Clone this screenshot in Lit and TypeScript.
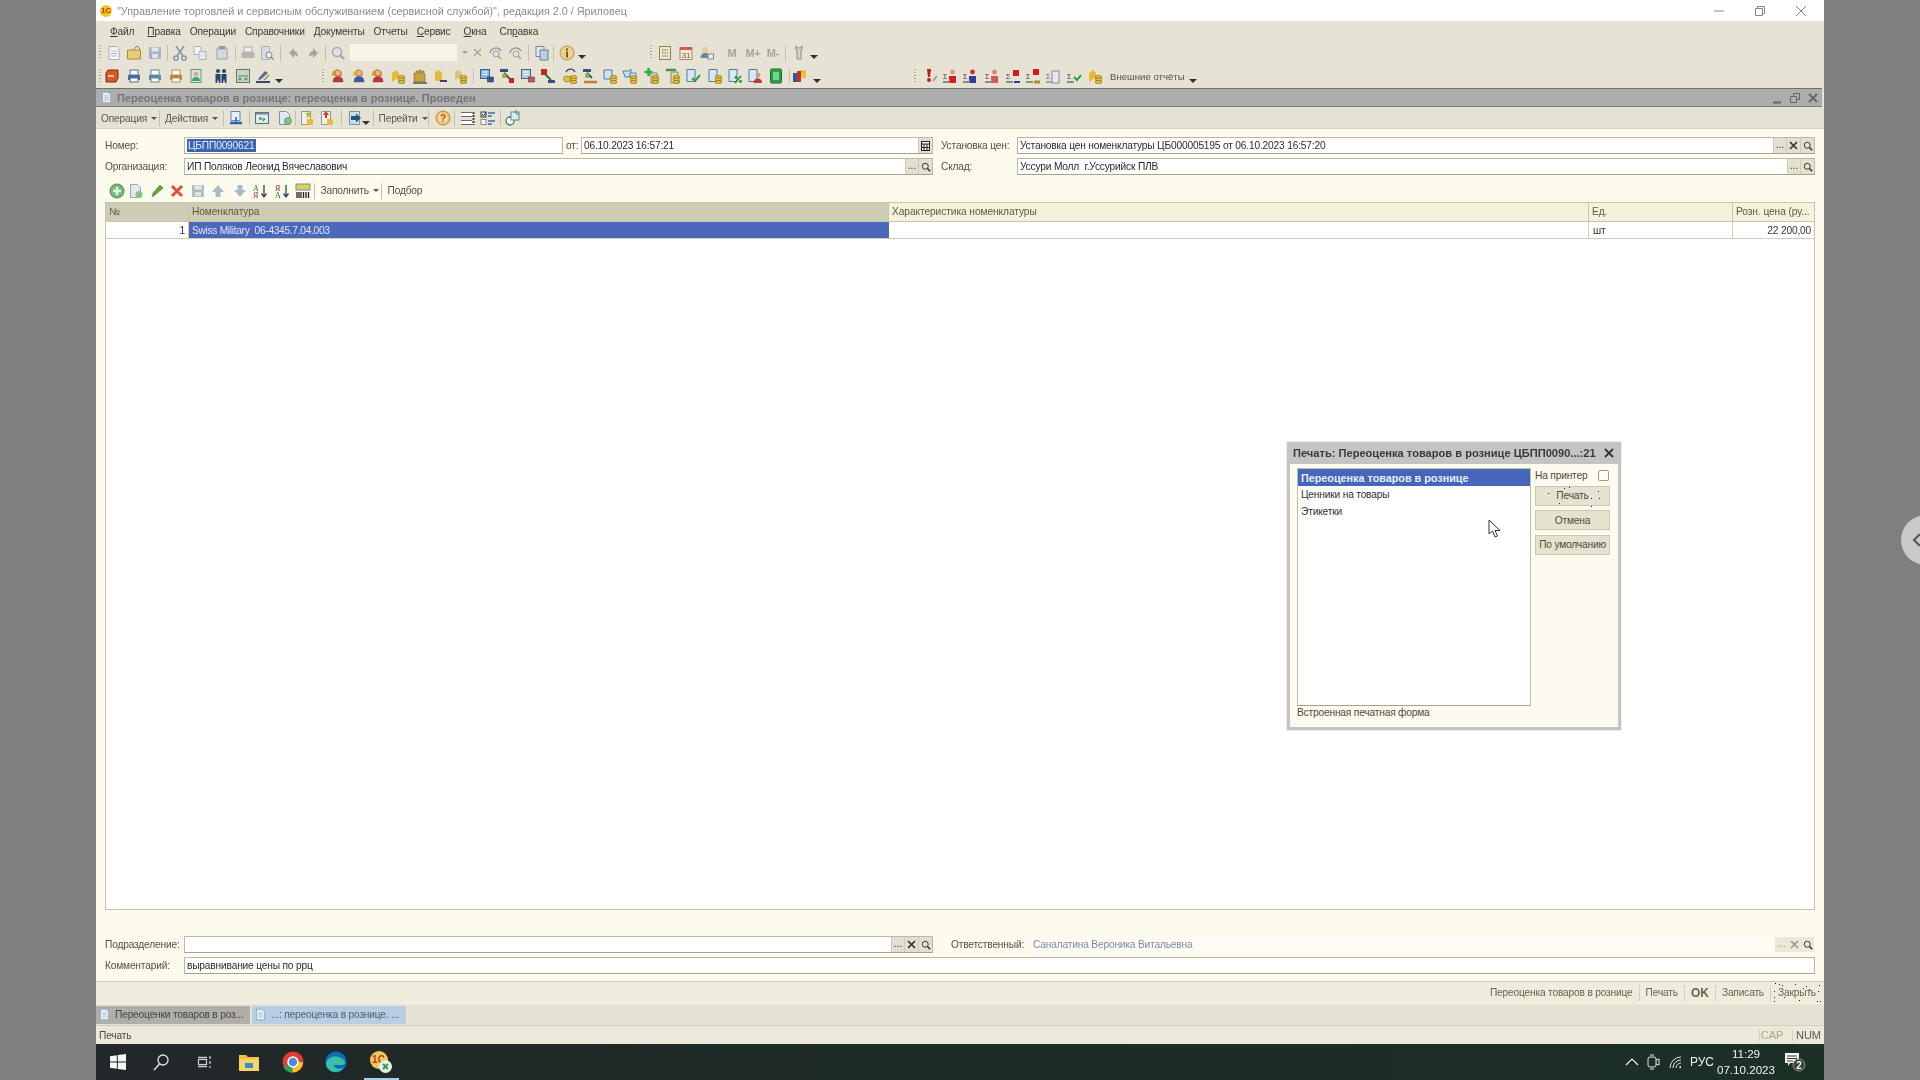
import { LitElement, html, css, svg } from 'lit';
import { customElement } from 'lit/decorators.js';

// small toolbar pictures, all on a 16x16 grid
const coins = svg`<ellipse cx="11.5" cy="9" rx="3.4" ry="1.5" fill="#e8c23c" stroke="#8a6d10" stroke-width=".7"/><ellipse cx="11.5" cy="11.5" rx="3.4" ry="1.5" fill="#e8c23c" stroke="#8a6d10" stroke-width=".7"/><ellipse cx="11.5" cy="14" rx="3.4" ry="1.5" fill="#e8c23c" stroke="#8a6d10" stroke-width=".7"/>`;
const sheet = (fill = '#fff', line = '#7d8ea5') => svg`<path d="M3 1.5h7l3 3v10H3z" fill="${fill}" stroke="${line}"/><path d="M5 6h6M5 8.5h6M5 11h6" stroke="#a9b6c6"/>`;
const person = (shirt: string) => svg`<circle cx="8" cy="5" r="3" fill="#f0b48c" stroke="#8a5a3a" stroke-width=".6"/><path d="M3 14c0-4 2-5.500 5-5.500s5 1.500 5 5.500z" fill="${shirt}" stroke="#555" stroke-width=".5"/>`;
const disk = (c: string) => svg`<rect x="2" y="2" width="12" height="12" rx="1" fill="${c}"/><rect x="4.500" y="2.500" width="7" height="4" fill="#e8e8e8"/><rect x="5" y="9" width="6" height="4" fill="#dfe3e8"/>`;
const printer = (c: string) => svg`<rect x="4" y="2" width="8" height="5" fill="#fff" stroke="${c}"/><path d="M2 7h12v5H2z" fill="${c}"/><rect x="4" y="10" width="8" height="4" fill="#fff" stroke="${c}"/>`;
const doc2 = (a: string, b: string) => svg`<rect x="1.500" y="1.500" width="9" height="9" fill="${a}" stroke="#45618a"/><path d="M3.500 4h5M3.500 6.500h5" stroke="#fff"/><rect x="8.500" y="9" width="6" height="5" fill="${b}" stroke="#333" stroke-width=".5"/>`;
const sigma = (c = '#334') => svg`<text x="1" y="11" font-size="7" font-family="Liberation Sans" fill="${c}">Σ</text><path d="M1 14h7" stroke="${c}"/>`;

const ICONS: Record<string, unknown> = {
  doc: sheet('#f7f8fb', '#a4b0c2'),
  folder: svg`<path d="M1.500 5h13v9h-13z" fill="#e8cd78" stroke="#a78c38"/><path d="M8 4l3-3 3 3" fill="none" stroke="#777"/>`,
  save: disk('#a7b3c4'),
  cut: svg`<path d="M4 1l7 10M12 1L5 11" stroke="#8796aa" stroke-width="1.600"/><circle cx="4" cy="13" r="2.200" fill="none" stroke="#7d8ea5" stroke-width="1.300"/><circle cx="12" cy="13" r="2.200" fill="none" stroke="#7d8ea5" stroke-width="1.300"/>`,
  copy: svg`<path d="M2 1.500h7v8H2z" fill="#f2f3f5" stroke="#aab4c2"/><path d="M7 6.500h7v8H7z" fill="#e6e8ec" stroke="#aab4c2"/>`,
  paste: svg`<rect x="2" y="2" width="12" height="13" rx="1.500" fill="#b8c0c8"/><rect x="5" y="1" width="6" height="3" fill="#8f99a3"/><rect x="4" y="5" width="8" height="8" fill="#d5d9dd"/>`,
  print: svg`<rect x="4" y="2" width="8" height="5" fill="#eee" stroke="#aaa"/><rect x="1.500" y="7" width="13" height="6" rx="1.500" fill="#b5b5ad"/>`,
  preview: svg`<path d="M2.500 1.500h8v13h-8z" fill="#d8dbe0" stroke="#aab0b8"/><circle cx="10" cy="10" r="3" fill="#eee" stroke="#888"/><path d="M12 12l2.500 2.500" stroke="#888" stroke-width="1.500"/>`,
  undo: svg`<path d="M8 3L3 8l5 5V10c2 0 3 1 4 2 0-4-2-6-4-6z" fill="#a4a49c"/>`,
  redo: svg`<path d="M8 3l5 5-5 5V10c-2 0-3 1-4 2 0-4 2-6 4-6z" fill="#a4a49c"/>`,
  lens: svg`<circle cx="7" cy="7" r="4.500" fill="#dfe2e2" stroke="#a4adad" stroke-width="1.500"/><path d="M10 10l4 4" stroke="#a4a49c" stroke-width="2.200"/>`,
  lensL: svg`<path d="M3 8a6 6 0 0 1 11-2" fill="none" stroke="#9aa19e" stroke-width="1.500"/><circle cx="9" cy="9" r="3" fill="#dfe2e2" stroke="#9aa19e"/><path d="M11 11l3 3" stroke="#9aa19e" stroke-width="1.500"/>`,
  pages: svg`<path d="M2 1.500h8v10H2z" fill="#e4e8ee" stroke="#7c8898"/><path d="M6 5h8v10H6z" fill="#bdd0e2" stroke="#5e7e9e"/>`,
  info: svg`<circle cx="8" cy="8" r="7" fill="#ecd28c" stroke="#b09050"/><rect x="7" y="6.500" width="2" height="6" fill="#8a5a18"/><rect x="7" y="3.500" width="2" height="2" fill="#8a5a18"/>`,
  calc: svg`<rect x="2.500" y="1.500" width="11" height="13" fill="#eee6c8" stroke="#8a8260"/><path d="M5 5h6M5 8h6M5 11h6" stroke="#6a6240" stroke-dasharray="1.500 1"/>`,
  cal: svg`<rect x="2" y="2.500" width="12" height="12" fill="#f4ead8" stroke="#a88868"/><rect x="2" y="2" width="12" height="3" fill="#c8604a"/><text x="8" y="13" font-size="8" font-family="Liberation Sans" text-anchor="middle" fill="#a04030">31</text>`,
  users: svg`<circle cx="6" cy="5" r="3" fill="#e9c9a0"/><path d="M1.500 13c0-3.500 2-5 4.500-5s4 1 4.500 3v2z" fill="#6a88ac"/><rect x="9" y="9" width="5.500" height="5" fill="#eee" stroke="#888"/>`,
  tool: svg`<path d="M5 1v4h1v9h4V5h1V1L9.500 3h-3z" fill="#d4d4ca" stroke="#8c8c82"/>`,
  box: svg`<path d="M2 5l2-3h10v8l-2 4H2z" fill="#d8582c" stroke="#7a2c10"/><path d="M4 8h6" stroke="#f0d080" stroke-width="2"/>`,
  pr1: printer('#4e6e98'), pr2: printer('#5a8aa0'), pr3: printer('#b88a48'),
  badge: svg`<rect x="3" y="1.500" width="10" height="13" fill="#cfe8d8" stroke="#6a9a80"/><circle cx="8" cy="6" r="2.300" fill="#e0a878"/><path d="M4 13c0-3 2-4 4-4s4 1 4 4z" fill="#45a070"/>`,
  men: svg`<circle cx="5" cy="3" r="2" fill="#27456e"/><circle cx="11" cy="3" r="2" fill="#27456e"/><path d="M2.500 6h5v9h-1.500l-1-4-1 4H2.500zM8.500 6h5v9H12l-1-4-1 4H8.500z" fill="#27456e"/>`,
  grid: svg`<rect x="1.500" y="1.500" width="13" height="13" fill="#c6d6c6" stroke="#667a6a"/><path d="M3 8h10" stroke="#667a6a"/><circle cx="5" cy="11" r="1.500" fill="#4aa060"/><circle cx="11" cy="11" r="1.500" fill="#4aa060"/>`,
  sign: svg`<path d="M1 14h14" stroke="#384868" stroke-width="2"/><path d="M3 11l7-8 3 2-8 7z" fill="#566a90"/><path d="M9 12l5-5" stroke="#8a9a50" stroke-width="1.500"/>`,
  cartR: svg`<path d="M2 4l5-3 5 3v4H2z" fill="#e8a020"/>${person('#d03030')}`,
  cartB: svg`<path d="M2 4l5-3 5 3v4H2z" fill="#e8c040"/>${person('#3858a8')}`,
  coinA: svg`<path d="M2 14V5l4-3 3 3v4z" fill="#e8b838"/>${coins}`,
  house: svg`<path d="M2 14V5h2V3h2v2h1V2h2v3h1V3h2v3h1v8z" fill="#c8a040" stroke="#6a5a20" stroke-width=".5"/><path d="M1 15h14" stroke="#556" stroke-width="1.500"/>`,
  coinB: svg`<path d="M3 13V4l4-2 3 3v8z" fill="#e8b838"/><path d="M8 13h7" stroke="#446" stroke-width="2"/>`,
  coinC: svg`<path d="M3 11V4l4-2 3 3v5z" fill="#d8c080"/>${coins}`,
  tr1: doc2('#8ab4dc', '#3058a8'),
  tr2: svg`<rect x="1" y="1" width="8" height="3" fill="#364e80"/><path d="M5 5l6 6" stroke="#287030" stroke-width="2"/><rect x="10" y="10" width="5" height="5" fill="#d02020"/><rect x="3" y="6" width="4" height="4" fill="#9ab04c"/>`,
  tr3: doc2('#b6cde8', '#d05060'),
  tr4: svg`<rect x="1" y="1" width="6" height="6" fill="#d02020"/><path d="M5 6l6 6" stroke="#287030" stroke-width="2"/><rect x="8" y="12" width="7" height="3" fill="#364e80"/>`,
  coinD: svg`<path d="M4 4a5 5 0 0 1 9 0" fill="none" stroke="#445" stroke-width="1.300"/>${coins}<ellipse cx="5" cy="11" rx="3.400" ry="3" fill="#e8c23c" stroke="#8a6d10" stroke-width=".7"/>`,
  tr5: svg`<rect x="1" y="1" width="8" height="3" fill="#364e80"/><path d="M5 5l5 5" stroke="#287030" stroke-width="2"/><rect x="3" y="6" width="4" height="4" fill="#9ab04c"/><path d="M2 14h13" stroke="#b88030" stroke-width="2.500"/>`,
  coinE: svg`<path d="M2 2h8v9H2z" fill="#cfe2f2" stroke="#507ea0"/>${coins}`,
  coinF: svg`<path d="M1 3h6l2-2v8H3z" fill="#bfe0f0" stroke="#507ea0"/><path d="M8 5h6v4H8z" fill="#dff0f8" stroke="#507ea0"/>${coins}`,
  plusC: svg`<path d="M4.500 0v8M.5 4h8" stroke="#28b030" stroke-width="2.500"/><path d="M7 5h6v10H7z" fill="#dcd8b8" stroke="#887"/>${coins}`,
  dashC: svg`<path d="M1 2h10" stroke="#3a9a40" stroke-width="2.500"/><path d="M6 4h7v11H6z" fill="#dcd8b8" stroke="#887"/>${coins}`,
  checkD: svg`<path d="M2 1.500h8v12H2z" fill="#d8e8f4" stroke="#507ea0"/><path d="M7 10l3 3 5-6" fill="none" stroke="#30a040" stroke-width="2"/>`,
  coinG: svg`<path d="M2 1.500h8v12H2z" fill="#d8e8f4" stroke="#507ea0"/>${coins}`,
  pct: svg`<path d="M2 1.500h8v12H2z" fill="#d8e8f4" stroke="#507ea0"/><path d="M8 15l6-7" stroke="#288a38" stroke-width="1.600"/><circle cx="9" cy="9.500" r="1.400" fill="#288a38"/><circle cx="13.500" cy="13.500" r="1.400" fill="#288a38"/>`,
  docP: svg`<path d="M2 1.500h8v12H2z" fill="#d8e8f4" stroke="#507ea0"/><circle cx="11" cy="7" r="2.400" fill="#e09878"/><path d="M6.500 15c0-3 2-4.500 4.500-4.500s4 1.500 4 4.500z" fill="#c03838"/>`,
  green: svg`<rect x="2.500" y="1" width="11" height="14" rx="1.500" fill="#28a048" stroke="#146a2c"/><rect x="5" y="4" width="6" height="8" fill="#78d090"/>`,
  books: svg`<rect x="1" y="5" width="4" height="9" fill="#2858a8"/><rect x="5" y="3" width="4" height="11" fill="#c83020"/><rect x="9" y="2" width="5" height="8" fill="#e8c040"/>`,
  warn: svg`<path d="M5 1h4l-1 8H6z" fill="#c81818"/><circle cx="7" cy="12" r="2" fill="#c81818"/><path d="M11 13l4-5" stroke="#98a0a8" stroke-width="2"/>`,
  sigR: svg`${sigma()}<circle cx="10.500" cy="4" r="2.400" fill="#e09878"/><path d="M7 11V8h7v7H8z" fill="#d02020"/>`,
  sigB: svg`${sigma()}<circle cx="10.500" cy="4" r="2.400" fill="#d03030"/><path d="M7 11V8h7v7H8z" fill="#2a3e9a"/>`,
  sigP: svg`${sigma()}<circle cx="10.500" cy="4" r="2.400" fill="#d88870"/><path d="M7 11V8h7v7H8z" fill="#d85858"/>`,
  sigF: svg`${sigma()}<path d="M9 14h6" stroke="#2a3a9a" stroke-width="2"/><path d="M8 2h6v6H8z" fill="#d81818"/>`,
  sigG: svg`${sigma()}<path d="M9 14h6" stroke="#b88a28" stroke-width="3"/><path d="M8 1h6v6H8z" fill="#d81818"/>`,
  sigD: svg`${sigma('#667')}<path d="M7 3h7v12H7z" fill="#e8e8e8" stroke="#889"/>`,
  sigC: svg`${sigma()}<path d="M8 9l3 3 4-5" fill="none" stroke="#28a038" stroke-width="2"/>`,
  expImp: svg`<path d="M3 1.500h9v9H3z" fill="#e8eef4" stroke="#6a88ac"/><path d="M2 13h12" stroke="#2a60b0" stroke-width="2.500"/><path d="M8 7v5" stroke="#2a60b0" stroke-width="1.500"/>`,
  refr: svg`<rect x="1.500" y="2.500" width="13" height="11" fill="#dceaf0" stroke="#556f80"/><rect x="1.500" y="2.500" width="13" height="2" fill="#708898"/><path d="M5 9h6M5 9l2-2M11 9l-2 2" stroke="#1e8038"/>`,
  newD: svg`<path d="M2.500 1.500h7l3 3v10h-10z" fill="#e0e8f0" stroke="#7a92aa"/><circle cx="11" cy="11" r="3.500" fill="#8ac088" stroke="#487a48" stroke-width=".6"/>`,
  docY: svg`<path d="M2.500 1.500h9v13h-9z" fill="#f0f0ea" stroke="#8a96a4"/><path d="M9 0l1.500 3H13l-2 2 1 3-2.500-1.500L7 8l1-3-2-2h2.500z" fill="#a8c038"/><rect x="8" y="9" width="6" height="6" fill="#e8b838"/>`,
  docR: svg`<path d="M2.500 1.500h9v13h-9z" fill="#f0f0ea" stroke="#8a96a4"/><path d="M7 1l3 4H8v3H6V5H4z" fill="#c84020"/><rect x="8" y="9" width="6" height="6" fill="#e8b838"/>`,
  goDoc: svg`<path d="M2.500 1.500h10v13h-10z" fill="#c8dcee" stroke="#7a92aa"/><path d="M4 6h5V3.500L14 8l-5 4.500V10H4z" fill="#27527e"/>`,
  help: svg`<circle cx="8" cy="8" r="7" fill="#f0c070" stroke="#bc8a38"/><circle cx="8" cy="8" r="5" fill="#f4d8a0"/><text x="8" y="11.500" font-size="10" font-weight="700" font-family="Liberation Sans" text-anchor="middle" fill="#c04a20">?</text>`,
  rows: svg`<path d="M1 2.500h11M1 6.500h11M1 10.500h11M1 14.500h11" stroke="#667"/><rect x="1" y="3" width="11" height="3" fill="#fff"/><rect x="1" y="11" width="11" height="3" fill="#fff"/><path d="M13.500 2v13" stroke="#444" stroke-width="2" stroke-dasharray="2 1"/>`,
  checks: svg`<rect x="1" y="2" width="5" height="5" fill="#fff" stroke="#333"/><path d="M2 4l1.500 2L6 2" stroke="#222" fill="none"/><rect x="1" y="9.500" width="5" height="5" fill="#fff" stroke="#888"/><path d="M8 3h7M8 6h4M8 11h7M8 14h4" stroke="#3a6ab4" stroke-width="1.500"/>`,
  clock: svg`<circle cx="5" cy="11" r="4" fill="#fff" stroke="#3a8a50" stroke-width="1.300"/><rect x="6" y="2" width="8" height="8" fill="#dfeaf2" stroke="#5e7e9e"/><path d="M11 0v4h3" stroke="#32a050" fill="none"/>`,
  add: svg`<circle cx="8" cy="8" r="7" fill="#78b878" stroke="#468a46"/><path d="M8 4v8M4 8h8" stroke="#e8f4e8" stroke-width="2.500"/>`,
  addD: svg`<path d="M2.500 1.500h7l3 3v10h-10z" fill="#e4e8ec" stroke="#9aa8b8"/><circle cx="11" cy="11.500" r="3.500" fill="#8ac088"/>`,
  pen: svg`<path d="M3 14l1-4 7-8 3 3-8 7z" fill="#58a838" stroke="#3a7a20" stroke-width=".5"/>`,
  del: svg`<path d="M3 3l10 10M13 3L3 13" stroke="#e05038" stroke-width="3"/>`,
  saveG: disk('#b4bcc4'),
  up: svg`<path d="M8 2l6 7h-3.500v5h-5V9H2z" fill="#a8bcc8"/>`,
  down: svg`<path d="M8 14l6-7h-3.500V2h-5v5H2z" fill="#a8bcc8"/>`,
  sortA: svg`<text x="1" y="7.500" font-size="8" font-family="Liberation Serif" fill="#2a5a2a">А</text><text x="1" y="15" font-size="8" font-family="Liberation Serif" fill="#a02a2a">Я</text><path d="M12 2v11M9.500 10.500L12 14l2.500-3.500" fill="none" stroke="#345" stroke-width="1.300"/>`,
  sortZ: svg`<text x="1" y="7.500" font-size="8" font-family="Liberation Serif" fill="#a02a2a">Я</text><text x="1" y="15" font-size="8" font-family="Liberation Serif" fill="#2a5a2a">А</text><path d="M12 2v11M9.500 10.500L12 14l2.500-3.500" fill="none" stroke="#345" stroke-width="1.300"/>`,
  barcode: svg`<rect x="1" y="1" width="14" height="6" fill="#d8d060" stroke="#889"/><path d="M2 9v6M4 9v6M6 9v6M8.500 9v6M11 9v6M13.500 9v6" stroke="#222" stroke-width="1.300"/>`,
  sheet: sheet('#e8f0f8', '#8aa4c0'),
};

const ico = (k: string, s = 16) => html`<svg class="ic" width="${s}" height="${s}" viewBox="0 0 16 16">${ICONS[k]}</svg>`;
const lensBtn = svg`<circle cx="7" cy="7" r="4" fill="none" stroke="#333" stroke-width="1.300"/><path d="M10 10l3.500 3.500" stroke="#333" stroke-width="2"/>`;

type Tool = [number, string];
// [centre x on the page, what sits there]; '|' separator, 'v' drop arrow, ':' grip, 'text' goes by itself
const ROW1: Tool[] = [[100,':'],[114,'doc'],[134,'folder'],[155,'save'],[167,'|'],[180,'cut'],[200,'copy'],[222,'paste'],[235,'|'],[248,'print'],[267,'preview'],[280,'|'],[294,'undo'],[313,'redo'],[325,'|'],[338,'lens'],[477,'x'],[495,'lensL'],[515,'lensL'],[528,'|'],[542,'pages'],[553,'|'],[567,'info'],[582,'v'],[651,':'],[665,'calc'],[686,'cal'],[707,'users'],[732,'M'],[753,'M+'],[773,'M-'],[785,'|'],[799,'tool'],[814,'v']];
const ROW2: Tool[] = [[100,':'],[112,'box'],[134,'pr1'],[155,'pr2'],[176,'pr3'],[196,'badge'],[221,'men'],[243,'grid'],[263,'sign'],[279,'v'],[323,':'],[338,'cartR'],[359,'cartB'],[378,'cartR'],[398,'coinA'],[420,'house'],[440,'coinB'],[460,'coinC'],[473,'|'],[487,'tr1'],[507,'tr2'],[528,'tr3'],[548,'tr4'],[570,'coinD'],[590,'tr5'],[610,'coinE'],[630,'coinF'],[652,'plusC'],[673,'dashC'],[693,'checkD'],[715,'coinG'],[735,'pct'],[755,'docP'],[776,'green'],[789,'|'],[800,'books'],[817,'v'],[915,':'],[930,'warn'],[950,'sigR'],[970,'sigB'],[992,'sigP'],[1013,'sigF'],[1033,'sigG'],[1053,'sigD'],[1074,'sigC'],[1095,'coinA'],[1147,'Внешние отчёты'],[1193,'v']];

// stray video-capture specks on the focused buttons, [x, y] inside the button
const SPECKS_PRINT = [[12,6],[28,1],[33,0],[55,11],[62,4],[63,11],[23,16],[55,19]];
const SPECKS_CLOSE = [[2,0],[6,1],[9,2],[22,1],[30,5],[33,3],[36,6],[1,8],[1,14],[1,18],[11,14],[26,17],[45,8],[44,18],[47,18],[46,2]];
const specks = (pts: number[][]) => `box-shadow:${pts.map(([x, y]) => `${x}px ${y}px 0 #222`).join(',')}`;

@customElement('app-root')
export class AppRoot extends LitElement {
  static styles = css`
    :host {
      display: block;
      width: 1920px;
      height: 1080px;
      position: relative;
      overflow: hidden;
      background: #808080;
      font-family: "Liberation Sans", Arial, sans-serif;
      font-size: 10.2px;
      letter-spacing: -.18px;
      color: #4c4a3c;
    }
    .ic { display: block; flex: none; }
    .win {
      position: absolute;
      left: 96px;
      top: 0;
      width: 1728px;
      height: 1080px;
      display: flex;
      flex-direction: column;
      background: #e6e2d4;
      filter: blur(.3px);
    }
    .titlebar {
      height: 21px;
      background: #fff;
      display: flex;
      align-items: center;
      padding-left: 4px;
      color: #8b8b8b;
      font-size: 10.8px;
      letter-spacing: 0;
      flex: none;
    }
    .titlebar .name { margin-left: 5px; }
    .winbtns { margin-left: auto; display: flex; gap: 29px; padding-right: 17px; }
    .logo {
      width: 12px; height: 12px; border-radius: 50%;
      background: #f0c81c; color: #c8301c;
      font: 700 8px "Liberation Sans", sans-serif;
      display: flex; align-items: center; justify-content: center;
    }
    .menu {
      height: 20px;
      display: flex;
      align-items: center;
      padding-left: 14px;
      gap: 9px;
      flex: none;
      color: #3c3c34;
    }
    .menu u { text-decoration-thickness: 1px; }
    .menu .wide { margin-left: 4px; }
    .tools { height: 23px; display: flex; align-items: center; flex: none; position: relative; }
    .tools.tall { height: 24px; }
    .slot { width: 16px; height: 16px; flex: none; display: flex; align-items: center; justify-content: center; }
    .sep { width: 1px; height: 16px; background: #c4c0b0; flex: none; }
    .grip { width: 2px; height: 15px; flex: none; background: repeating-linear-gradient(#b0ac98 0 1px, transparent 1px 3px); }
    .drop { width: 0; height: 0; flex: none; border: 4px solid transparent; border-top-color: #333; border-bottom: 0; margin-top: 9px; }
    .mini { display: inline-block; width: 0; height: 0; flex: none; border: 3px solid transparent; border-top-color: #555; border-bottom: 0; margin-left: 4px; }
    .mem { color: #a6a498; font-weight: 700; font-size: 11px; white-space: nowrap; }
    .tooltext { white-space: nowrap; font-size: 9.6px; letter-spacing: 0; color: #55534a; flex: none; }
    .quick {
      position: absolute; left: 254px; top: 3px; width: 107px; height: 17px; background: #f7f4e8;
    }
    .quick-arrow { position: absolute; left: 366px; top: 10px; border: 3.5px solid transparent; border-top-color: #a4a49c; border-bottom: 0; }

    .doctitle {
      height: 19px;
      margin-right: 2px;
      flex: none;
      background: #adadad;
      border-top: 1px solid #6f6f6f;
      border-bottom: 1px solid #7c7c7c;
      box-sizing: border-box;
      display: flex;
      align-items: center;
      padding-left: 4px;
      gap: 4px;
      color: #757575;
      font-size: 11px;
      font-weight: 700;
      letter-spacing: 0;
    }
    .docbtns { margin-left: auto; display: flex; gap: 6px; align-items: center; padding-right: 3px; }
    .doctools { height: 22px; padding-top: 1px; flex: none; display: flex; align-items: center; border-bottom: 1px solid #d8d4c2; box-sizing: border-box; color: #5c5a4a; }
    .doctools .t { display: flex; align-items: center; white-space: nowrap; flex: none; }

    .form {
      height: 853px;
      flex: none;
      box-sizing: border-box;
      background: #fdfaee;
      padding: 8px 9px 7px 9px;
      display: flex;
      flex-direction: column;
      border-bottom: 1px solid #cfcbb8;
    }
    .line { display: flex; align-items: stretch; height: 17px; flex: none; }
    .line + .line { margin-top: 4px; }
    .lbl { display: flex; align-items: center; color: #55533f; white-space: nowrap; flex: none; box-sizing: border-box; }
    .field {
      display: flex; align-items: stretch; flex: none;
      background: #fff;
      box-sizing: border-box;
      border: 1px solid #bdb9a4;
      border-bottom-color: #a8a48c;
      color: #2c2c2c;
    }
    .field .val { flex: 1; display: flex; align-items: center; padding-left: 2px; white-space: nowrap; overflow: hidden; }
    .selected { background: #3e63b4; color: #e6ecfa; padding: 0 1px; line-height: 13px; }
    .b { width: 13px; background: #e4e0cf; border-left: 1px solid #cfcbb8; display: flex; align-items: center; justify-content: center; flex: none; color: #333; font-size: 10px; font-weight: 700; }
    .b.dots { font-weight: 400; letter-spacing: 0; align-items: flex-end; padding-bottom: 3px; box-sizing: border-box; }

    .tabletools { height: 23px; margin-top: 4px; display: flex; align-items: center; flex: none; color: #55533f; }
    .tabletools .t { display: flex; align-items: center; white-space: nowrap; flex: none; }
    .grid {
      flex: 1;
      border: 1px solid #c7c3ac;
      background: #fff;
      display: flex;
      flex-direction: column;
    }
    .gh, .gr { display: grid; grid-template-columns: 83px 700px 700px 144px 1fr; flex: none; }
    .gh { height: 19px; background: #f5f2dc; border-bottom: 1px solid #c9c5ae; color: #5c5a44; box-sizing: border-box; letter-spacing: -.08px; }
    .gh > div { display: flex; align-items: center; padding: 0 0 1px 3px; white-space: nowrap; border-right: 1px solid #c9c5ae; overflow: hidden; }
    .gh > div:last-child { border-right: 0; }
    .gh > .act { background: #cfccb6; }
    .gr { height: 17px; border-bottom: 1px solid #d0ccb8; color: #333; box-sizing: border-box; }
    .gr > div { display: flex; align-items: center; padding: 0 3px 0 4px; border-right: 1px solid #d0ccb8; white-space: nowrap; }
    .gr > div:last-child { border-right: 0; }
    .gr > .r { justify-content: flex-end; }
    .gr > .on { background: #4b68bd; color: #dde6f8; border-right: 0; letter-spacing: -.3px; padding-left: 3px; }

    .lower { margin-top: 26px; display: flex; flex-direction: column; flex: none; }
    .flat { border-color: transparent; background: #fdfbf2; color: #7d8ca8; }
    .flat .b { background: #ebe8da; color: #9a9a90; border-left: 0; }
    .resp { padding-left: 18px; }

    .cmd {
      height: 22px; flex: none; display: flex; align-items: center; justify-content: flex-end;
      background: #f0ecdd; padding-right: 6px; color: #6a6446;
      border-bottom: 1px solid #f4f1e4;
      box-sizing: border-box;
    }
    .cmd > span { padding: 0 6px; border-right: 1px solid #d5d1be; line-height: 16px; }
    .cmd > span:last-child { border-right: 0; }
    .cmd .ok { font-weight: 700; font-size: 12px; letter-spacing: 0; }
    .cmd .close { padding: 2px 2px 2px 5px; margin-left: 2px; position: relative; }
    .speck { position: absolute; left: 0; top: 0; width: 1px; height: 1px; }

    .tabs { height: 22px; flex: none; display: flex; align-items: center; gap: 2px; border-bottom: 1px solid #d2ceba; box-sizing: border-box; }
    .tab { width: 154px; height: 18px; display: flex; align-items: center; gap: 4px; padding-left: 2px; box-sizing: border-box; color: #444; white-space: nowrap; }
    .tab.a { background: #b0aeaa; }
    .tab.b2 { background: #b6cfe2; color: #52606e; }

    .status { height: 18px; flex: none; display: flex; align-items: center; padding-left: 3px; color: #4c4a3c; background: #ece8da; }
    .keys { margin-left: auto; display: flex; gap: 8px; }
    .keys span { width: 24px; text-align: center; border-left: 1px solid #d8d4c4; color: #a8a690; font-size: 11px; letter-spacing: 0; }
    .keys span + span { width: 31px; color: #5c5a4a; }

    .taskbar {
      flex: 1;
      display: flex;
      align-items: center;
      background: linear-gradient(90deg, #23282a, #1d2a26 40%, #1c3026);
      position: relative;
      color: #eef2ee;
      letter-spacing: 0;
    }
    .tb { width: 43.500px; display: flex; justify-content: center; flex: none; position: relative; }
    .tb.apps { margin-left: 1px; }
    .tb.on { margin-left: 1.500px; }
    .tb.on::after { content: ""; position: absolute; left: 4px; right: 4px; bottom: -6px; height: 2px; background: #a8d0e8; }
    .tray { margin-left: auto; display: flex; align-items: center; gap: 8px; padding-right: 18px; font-size: 12px; }
    .tray .wifi { margin-left: 1px; }
    .clock { text-align: center; line-height: 16px; margin: 0 1px 0 -5px; font-size: 11.6px; }

    .dialog {
      position: absolute;
      left: 1287px;
      top: 442px;
      width: 334px;
      height: 288px;
      box-sizing: border-box;
      background: #c4c4c4;
      padding: 0 3px 3px;
      display: flex;
      flex-direction: column;
      box-shadow: 0 0 1px #999;
      filter: blur(.3px);
    }
    .dlgtitle { height: 22px; flex: none; display: flex; align-items: center; padding: 0 4px 0 3px; color: #3a3a3a; font-weight: 700; font-size: 11.1px; letter-spacing: 0; white-space: nowrap; }
    .dlgtitle svg { margin-left: auto; }
    .dlgbody { flex: 1; background: #fdfbef; padding: 4px 8px 0 7px; display: grid; grid-template-columns: 234px 1fr; grid-template-rows: 238px 1fr; column-gap: 3px; }
    .list { background: #fff; border: 1px solid #c2bea8; border-bottom-color: #a8a48c; box-sizing: border-box; }
    .item { height: 17px; padding-left: 3px; display: flex; align-items: center; color: #333; }
    .item.on { background: #4666bc; color: #e8eefc; font-weight: 700; font-size: 10.8px; letter-spacing: 0; }
    .side { display: flex; flex-direction: column; gap: 4.500px; }
    .printer { display: flex; align-items: center; justify-content: space-between; height: 12px; margin-left: 1px; padding: 1px 1px 0 0; color: #4c4a3c; }
    .chk { width: 11px; height: 11px; background: #fff; border: 1px solid #9e9a84; border-radius: 2px; box-sizing: border-box; }
    .btn { height: 20px; background: #e6e2d0; border: 1px solid #cbc7b4; box-sizing: border-box; display: flex; align-items: center; justify-content: center; color: #4e4c3c; margin-left: 1px; white-space: nowrap; position: relative; }
    .caption { grid-column: 1 / 3; color: #4c4a3c; padding-top: 1px; }

    .cursor { position: absolute; left: 1488px; top: 519px; }
    .side-tab {
      position: absolute; left: 1901px; top: 515px; width: 50px; height: 50px; border-radius: 50%;
      background: #c9c9c9;
    }
    .side-tab svg { position: absolute; left: 11px; top: 17px; }
  `;

  // flow a row of tools, with the space before each one worked out from its centre
  private tools(items: Tool[], startX: number) {
    let at = startX;
    return items.map(([x, k]) => {
      const w = k === '|' ? 1 : k === ':' ? 2 : k === 'v' ? 8 : k.length > 3 && !ICONS[k] ? 74 : 16;
      const gap = x - w / 2 - at;
      at = x + w / 2;
      const st = `margin-left:${gap}px`;
      if (k === '|') return html`<i class="sep" style=${st}></i>`;
      if (k === ':') return html`<i class="grip" style=${st}></i>`;
      if (k === 'v') return html`<i class="drop" style=${st}></i>`;
      if (k === 'x') return html`<span class="slot" style=${st}><svg width="9" height="9" viewBox="0 0 9 9"><path d="M1 1l7 7M8 1L1 8" stroke="#a4a49c" stroke-width="1.400"/></svg></span>`;
      if (k[0] === 'M') return html`<span class="slot mem" style=${st}>${k}</span>`;
      if (w === 74) return html`<span class="tooltext" style="${st};width:74px">${k}</span>`;
      return html`<span class="slot" style=${st}>${ico(k)}</span>`;
    });
  }

  private btns(list: string[]) {
    return list.map((b) =>
      b === '...'
        ? html`<span class="b dots">...</span>`
        : b === 'x'
          ? html`<span class="b"><svg width="9" height="9" viewBox="0 0 9 9"><path d="M1 1l7 7M8 1L1 8" stroke="currentColor" stroke-width="1.700"/></svg></span>`
          : b === 'cal'
            ? html`<span class="b"><svg width="9" height="10" viewBox="0 0 9 10"><rect x=".5" y=".5" width="8" height="9" fill="#fff" stroke="#222"/><path d="M0 3h9M3 3v7M6 3v7M0 6.500h9" stroke="#222"/></svg></span>`
            : html`<span class="b"><svg width="12" height="12" viewBox="0 0 16 16">${lensBtn}</svg></span>`,
    );
  }

  render() {
    return html`
      <div class="win">
        <div class="titlebar">
          <span class="logo">1С</span>
          <span class="name">"Управление торговлей и сервисным обслуживанием (сервисной службой)", редакция 2.0 / Яриловец</span>
          <span class="winbtns">
            <svg width="12" height="12" viewBox="0 0 12 12"><path d="M1 6h10" stroke="#888"/></svg>
            <svg width="12" height="12" viewBox="0 0 12 12"><path d="M1.500 3.500h7v7h-7zM3.500 3V1.500h7v7H9" fill="none" stroke="#888"/></svg>
            <svg width="12" height="12" viewBox="0 0 12 12"><path d="M1 1l10 10M11 1L1 11" stroke="#888"/></svg>
          </span>
        </div>
        <div class="menu">
          <span><u>Ф</u>айл</span><span class="wide"><u>П</u>равка</span><span>Операции</span><span>Справочники</span><span><u>Д</u>окументы</span><span>Отчеты</span><span><u>С</u>ервис</span><span class="wide"><u>О</u>кна</span><span class="wide">Сп<u>р</u>авка</span>
        </div>
        <div class="tools">${this.tools(ROW1, 96)}<i class="quick"></i><i class="quick-arrow"></i></div>
        <div class="tools tall">${this.tools(ROW2, 96)}</div>
        <div class="doctitle">
          ${ico('sheet', 13)}
          <span>Переоценка товаров в рознице: переоценка в рознице. Проведен</span>
          <span class="docbtns">
            <svg width="12" height="12" viewBox="0 0 12 12"><path d="M2 10.500h8" stroke="#666" stroke-width="2"/></svg>
            <svg width="12" height="12" viewBox="0 0 12 12"><path d="M1.500 4.500h6v6h-6zM4.500 4V1.500h6v6H8" fill="none" stroke="#666"/></svg>
            <svg width="12" height="12" viewBox="0 0 12 12"><path d="M2 2l8 8M10 2l-8 8" stroke="#666" stroke-width="1.800"/></svg>
          </span>
        </div>
        <div class="doctools">
          <span class="t" style="margin-left:5px;width:54px">Операция<i class="mini"></i></span>
          <i class="sep" style="margin-left:4px"></i>
          <span class="t" style="margin-left:5px;width:53px">Действия<i class="mini"></i></span>
          ${this.tools([[223,'|'],[236,'expImp'],[249,'|'],[262,'refr'],[285,'newD'],[295,'|'],[307,'docY'],[327,'docR'],[341,'|'],[355,'goDoc'],[366,'v'],[373,'|']], 218)}
          <span class="t" style="margin-left:5px;width:45px">Перейти<i class="mini"></i></span>
          ${this.tools([[429,'|'],[443,'help'],[455,'|'],[468,'rows'],[488,'checks'],[501,'|'],[513,'clock']], 424)}
        </div>
        <div class="form">
          <div class="line">
            <span class="lbl" style="width:79px">Номер:</span>
            <span class="field" style="width:379px"><span class="val"><span class="selected">ЦБПП0090621</span></span></span>
            <span class="lbl" style="width:18px;padding-left:3px">от:</span>
            <span class="field" style="width:352px"><span class="val">06.10.2023 16:57:21</span>${this.btns(['cal'])}</span>
            <span class="lbl" style="width:84px;padding-left:8px">Установка цен:</span>
            <span class="field" style="width:798px"><span class="val">Установка цен номенклатуры ЦБ000005195 от 06.10.2023 16:57:20</span>${this.btns(['...', 'x', 's'])}</span>
          </div>
          <div class="line">
            <span class="lbl" style="width:79px">Организация:</span>
            <span class="field" style="width:749px"><span class="val">ИП Поляков Леонид Вячеславович</span>${this.btns(['...', 's'])}</span>
            <span class="lbl" style="width:84px;padding-left:8px">Склад:</span>
            <span class="field" style="width:798px"><span class="val">Уссури Молл&nbsp; г.Уссурийск ПЛВ</span>${this.btns(['...', 's'])}</span>
          </div>
          <div class="tabletools">
            ${this.tools([[117,'add'],[136,'addD'],[157,'pen'],[177,'del'],[198,'saveG'],[218,'up'],[240,'down'],[260,'sortA'],[282,'sortZ'],[303,'barcode'],[314,'|']], 105)}
            <span class="t" style="margin-left:6px;width:60px">Заполнить<i class="mini"></i></span>
            <i class="sep"></i>
            <span class="t" style="margin-left:6px">Подбор</span>
          </div>
          <div class="grid">
            <div class="gh">
              <div class="act">№</div>
              <div class="act">Номенклатура</div>
              <div>Характеристика номенклатуры</div>
              <div>Ед.</div>
              <div>Розн. цена (ру...</div>
            </div>
            <div class="gr">
              <div class="r">1</div>
              <div class="on">Swiss Military&nbsp; 06-4345.7.04.003</div>
              <div></div>
              <div>шт</div>
              <div class="r">22 200,00</div>
            </div>
          </div>
          <div class="lower">
            <div class="line">
              <span class="lbl" style="width:79px">Подразделение:</span>
              <span class="field" style="width:749px"><span class="val"></span>${this.btns(['...', 'x', 's'])}</span>
              <span class="lbl resp" style="width:97px">Ответственный:</span>
              <span class="field flat" style="width:785px"><span class="val">Саналатина Вероника Витальевна</span>${this.btns(['...', 'x', 's'])}</span>
            </div>
            <div class="line">
              <span class="lbl" style="width:79px">Комментарий:</span>
              <span class="field" style="width:1631px"><span class="val">выравнивание цены по ррц</span></span>
            </div>
          </div>
        </div>
        <div class="cmd">
          <span>Переоценка товаров в рознице</span><span>Печать</span><span class="ok">OK</span><span>Записать</span><span class="close">Закрыть<i class="speck" style=${specks(SPECKS_CLOSE)}></i></span>
        </div>
        <div class="tabs">
          <div class="tab a">${ico('sheet', 13)}Переоценки товаров в роз...</div>
          <div class="tab b2">${ico('sheet', 13)}...: переоценка в рознице. ...</div>
        </div>
        <div class="status">Печать<span class="keys"><span>CAP</span><span>NUM</span></span></div>
        <div class="taskbar">
          <span class="tb"><svg width="16" height="16" viewBox="0 0 16 16"><path d="M0 2.200l6.800-1v6.300H0zM7.800 1l8.200-1v7.500H7.800zM0 8.500h6.800v6.300l-6.800-1zM7.800 8.500H16V16l-8.200-1z" fill="#f4f6f8"/></svg></span>
          <span class="tb"><svg width="16" height="17" viewBox="0 0 16 17"><circle cx="10" cy="6" r="5" fill="none" stroke="#dfe4e4" stroke-width="1.300"/><path d="M6.500 10L1 16" stroke="#dfe4e4" stroke-width="1.500"/></svg></span>
          <span class="tb"><svg width="16" height="16" viewBox="0 0 16 16"><path d="M1 3.500h9M1 12.500h9" stroke="#c8cec8" stroke-width="1.300"/><rect x="1.500" y="5.500" width="8" height="5" fill="none" stroke="#c8cec8" stroke-width="1.200"/><path d="M13 2v3M13 7v3M13 12v2" stroke="#c8cec8" stroke-width="1.300"/></svg></span>
          <span class="tb apps"><svg width="20" height="18" viewBox="0 0 20 18"><path d="M0 2h7l2 2h11v14H0z" fill="#f0c040"/><rect x="0" y="6" width="20" height="12" fill="#f6d468"/><rect x="6" y="10" width="8" height="5" fill="#3a88c8"/></svg></span>
          <span class="tb"><svg width="22" height="22" viewBox="0 0 22 22"><circle cx="11" cy="11" r="10.500" fill="#e03c30"/><path d="M11 11L1.500 16.500A10.500 10.500 0 0 0 11 21.500z" fill="#30a050"/><path d="M11 11h10a10.500 10.500 0 0 1-10.500 10.500z" fill="#f4c420"/><circle cx="11" cy="11" r="5" fill="#4a88e8" stroke="#fff" stroke-width="1.500"/></svg></span>
          <span class="tb"><svg width="22" height="22" viewBox="0 0 22 22"><circle cx="11" cy="11" r="10.500" fill="#0c6eb8"/><path d="M1 12c2-7 12-9 18-3 2 2 1 5-2 5H9c0 3 4 5 9 3-3 4-8 5-12 3-4-2-5-5-5-8z" fill="#38c0a8"/></svg></span>
          <span class="tb on"><svg width="24" height="24" viewBox="0 0 24 24"><circle cx="10" cy="10" r="9" fill="#f0c860"/><text x="9.500" y="13" font-size="10" font-weight="700" font-family="Liberation Sans" text-anchor="middle" fill="#c8301c">1С</text><circle cx="16.500" cy="16.500" r="6.500" fill="#e8f0e8"/><path d="M14 14l5 5M19 14l-5 5" stroke="#2a9a48" stroke-width="1.800"/></svg></span>
          <div class="tray">
            <svg width="14" height="8" viewBox="0 0 14 8"><path d="M1 7l6-6 6 6" fill="none" stroke="#eef2ee" stroke-width="1.200"/></svg>
            <svg width="13" height="16" viewBox="0 0 13 16"><rect x="1" y="3" width="8" height="10" rx="2" fill="none" stroke="#dfe6df"/><path d="M9 6l3-1v6l-3-1M3 1h4M3 15h4" fill="none" stroke="#dfe6df"/></svg>
            <svg class="wifi" width="13" height="13" viewBox="0 0 13 13"><path d="M1 12a11 11 0 0 1 11-11M4 12a8 8 0 0 1 8-8M7 12a5 5 0 0 1 5-5" fill="none" stroke="#dfe6df"/><path d="M10 12a2 2 0 0 1 2-2v2z" fill="#dfe6df"/></svg>
            <span>РУС</span>
            <span class="clock">11:29<br />07.10.2023</span>
            <svg width="22" height="20" viewBox="0 0 22 20"><path d="M1 1h14v10H6l-2 3v-3H1z" fill="#f4f6f4"/><path d="M3 4h10M3 6.500h10M3 9h6" stroke="#333"/><circle cx="15" cy="13" r="6" fill="#38443c" stroke="#8a948c"/><text x="15" y="16.500" font-size="10" font-weight="700" font-family="Liberation Sans" text-anchor="middle" fill="#f4f6f4">2</text></svg>
          </div>
        </div>
      </div>

      <div class="dialog">
        <div class="dlgtitle">
          Печать: Переоценка товаров в рознице ЦБПП0090...:21
          <svg width="10" height="10" viewBox="0 0 10 10"><path d="M1 1l8 8M9 1L1 9" stroke="#333" stroke-width="1.800"/></svg>
        </div>
        <div class="dlgbody">
          <div class="list">
            <div class="item on">Переоценка товаров в рознице</div>
            <div class="item">Ценники на товары</div>
            <div class="item">Этикетки</div>
          </div>
          <div class="side">
            <div class="printer">На принтер<i class="chk"></i></div>
            <div class="btn">Печать<i class="speck" style=${specks(SPECKS_PRINT)}></i></div>
            <div class="btn">Отмена</div>
            <div class="btn">По умолчанию</div>
          </div>
          <div class="caption">Встроенная печатная форма</div>
        </div>
      </div>

      <svg class="cursor" width="13" height="19" viewBox="0 0 13 19"><path d="M1 1v14l3.500-3 2.500 6 2.500-1-2.500-5.500H12z" fill="#fff" stroke="#333"/></svg>
      <div class="side-tab"><svg width="10" height="16" viewBox="0 0 10 16"><path d="M8 2L2 8l6 6" fill="none" stroke="#555" stroke-width="2"/></svg></div>
    `;
  }
}
